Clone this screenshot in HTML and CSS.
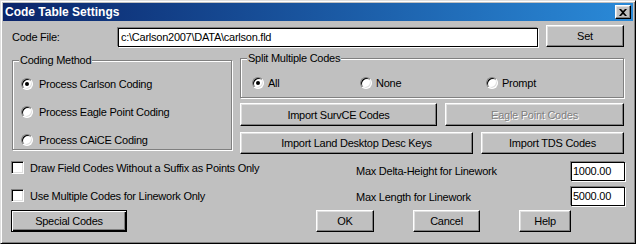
FILE: index.html
```html
<!DOCTYPE html>
<html lang="en">
<head>
  <meta charset="UTF-8">
  <title>Code Table Settings</title>
  <link rel="stylesheet" href="styles.css">
</head>
<body>

<div class="window">

  <!-- Titelleiste -->
  <div class="titlebar">
    <span class="title">Code Table Settings</span>
    <button class="btn close-btn" aria-label="Close">
      <svg width="8" height="7" viewBox="0 0 8 7">
        <path d="M0 0h2l2 2 2-2h2L5 3.5 8 7H6L4 5 2 7H0l3-3.5z" fill="#000"/>
      </svg>
    </button>
  </div>

  <div class="content">

    <!-- Code-Datei -->
    <div class="file-row">
      <span class="file-label">Code File:</span>
      <div class="field file-field">c:\Carlson2007\DATA\carlson.fld</div>
      <button class="btn set-btn">Set</button>
    </div>

    <div class="mid-row">
      <!-- Coding Method -->
      <div class="group coding-group">
        <span class="legend">Coding Method</span>
        <div class="radio-line"><span class="radio checked"></span>Process Carlson Coding</div>
        <div class="radio-line"><span class="radio"></span>Process Eagle Point Coding</div>
        <div class="radio-line"><span class="radio"></span>Process CAiCE Coding</div>
      </div>

      <div class="right-col">
        <!-- Split Multiple Codes -->
        <div class="group split-group">
          <span class="legend">Split Multiple Codes</span>
          <div class="split-options">
            <div class="split-opt opt-all"><span class="radio checked"></span>All</div>
            <div class="split-opt opt-none"><span class="radio"></span>None</div>
            <div class="split-opt"><span class="radio"></span>Prompt</div>
          </div>
        </div>

        <div class="btn-row row-one">
          <button class="btn survce-btn">Import SurvCE Codes</button>
          <button class="btn eagle-btn" disabled>Eagle Point Codes</button>
        </div>
        <div class="btn-row row-two">
          <button class="btn land-btn">Import Land Desktop Desc Keys</button>
          <button class="btn tds-btn">Import TDS Codes</button>
        </div>
      </div>
    </div>

    <!-- Optionen + Grenzwerte -->
    <div class="options-grid">
      <div class="check-line check-one"><span class="checkbox"></span>Draw Field Codes Without a Suffix as Points Only</div>
      <span class="opt-label">Max Delta-Height for Linework</span>
      <div class="field num-field field-one">1000.00</div>

      <div class="check-line check-two"><span class="checkbox"></span>Use Multiple Codes for Linework Only</div>
      <span class="opt-label">Max Length for Linework</span>
      <div class="field num-field">5000.00</div>
    </div>

    <div class="bottom-row">
      <button class="btn btn-default special-btn">Special Codes</button>
      <button class="btn ok-btn">OK</button>
      <button class="btn cancel-btn">Cancel</button>
      <button class="btn help-btn">Help</button>
    </div>

  </div>
</div>

</body>
</html>
```

FILE: styles.css
```css
/* =====================
   Farben (klassisches Windows)
   ===================== */
:root {
  --face: #c0c0c0;
  --light: #dfdfdf;
  --shadow: #808080;
  --dark: #000000;
  --title-from: #0a246a;
  --title-to: #2a8ad8;
}

* {
  box-sizing: border-box;
}

body {
  margin: 0;
  font-family: "Liberation Sans", Arial, sans-serif;
  font-size: 11px;
  letter-spacing: -0.25px;
  color: #000;
  background: var(--face);
}

/* =====================
   Fenster + Titelleiste
   ===================== */
.window {
  width: 636px;
  height: 244px;
  background: var(--face);
  border: 1px solid;
  border-color: var(--light) var(--dark) var(--dark) var(--light);
  box-shadow: inset 1px 1px #fff, inset -1px -1px var(--shadow);
  padding: 2px;
}

.titlebar {
  height: 18px;
  display: flex;
  align-items: center;
  padding: 0 2px;
  background: linear-gradient(to right, var(--title-from), var(--title-to));
  color: #fff;
}

.title {
  font-weight: bold;
  font-size: 12px;
  letter-spacing: 0;
}

.close-btn {
  margin-left: auto;
  width: 16px;
  height: 14px;
  display: flex;
  align-items: center;
  justify-content: center;
}

/* =====================
   Buttons / Felder
   ===================== */
.btn {
  font: inherit;
  letter-spacing: inherit;
  color: #000;
  padding: 0;
  background: var(--face);
  border: 1px solid;
  border-color: #fff var(--dark) var(--dark) #fff;
  box-shadow: inset -1px -1px var(--shadow), inset 1px 1px var(--light);
}

.btn:disabled {
  color: var(--shadow);
  text-shadow: 1px 1px #fff;
}

.btn-default {
  border: 1px solid var(--dark);
  box-shadow: inset 1px 1px #fff, inset -1px -1px var(--dark), inset -2px -2px var(--shadow);
}

.field {
  height: 19px;
  background: #fff;
  border: 1px solid var(--dark);
  box-shadow: -1px -1px var(--shadow), 1px 1px #fff;
  padding: 0 2px;
  line-height: 17px;
  white-space: nowrap;
  overflow: hidden;
}

.radio {
  width: 12px;
  height: 12px;
  flex-shrink: 0;
  border-radius: 50%;
  background: #fff;
  border: 1px solid;
  border-color: var(--shadow) #fff #fff var(--shadow);
  box-shadow: inset 1px 1px var(--dark), inset -1px -1px var(--light);
  display: flex;
  align-items: center;
  justify-content: center;
}

.radio.checked::after {
  content: "";
  width: 4px;
  height: 4px;
  border-radius: 50%;
  background: #000;
}

.checkbox {
  width: 13px;
  height: 13px;
  flex-shrink: 0;
  background: #fff;
  border: 1px solid;
  border-color: var(--shadow) #fff #fff var(--shadow);
  box-shadow: inset 1px 1px var(--dark), inset -1px -1px var(--light);
}

/* Gruppenrahmen, geaetzt */
.group {
  position: relative;
  border: 1px solid var(--shadow);
  box-shadow: inset 1px 1px #fff, 1px 1px #fff;
}

.group .legend {
  position: absolute;
  top: -8px;
  left: 6px;
  padding: 0 1px;
  background: var(--face);
  line-height: 14px;
}

/* =====================
   Inhalt
   ===================== */
.content {
  padding: 0 9px;
}

.file-row {
  display: flex;
  align-items: flex-end;
  height: 21px;
  margin-top: 5px;
}

.file-label {
  width: 106px;
  line-height: 19px;
}

.file-field {
  width: 420px;
}

.set-btn {
  width: 78px;
  height: 22px;
  margin-left: 8px;
}

.mid-row {
  display: flex;
  gap: 8px;
  margin-top: 11px;
}

.coding-group {
  width: 220px;
  height: 90px;
  margin-top: 2px;
  padding: 16px 0 0 8px;
  display: flex;
  flex-direction: column;
  gap: 14px;
}

.radio-line {
  display: flex;
  align-items: center;
  height: 14px;
}

.coding-group .radio {
  margin-right: 6px;
}

.right-col {
  width: 384px;
}

.split-group {
  height: 40px;
  padding: 17px 0 0 11px;
}

.split-options {
  display: flex;
}

.split-opt {
  display: flex;
  align-items: center;
  height: 14px;
}

.split-opt .radio {
  margin-right: 4px;
}

.opt-all {
  width: 108px;
}

.opt-none {
  width: 126px;
}

.btn-row {
  display: flex;
  gap: 8px;
}

.row-one {
  margin-top: 5px;
  height: 23px;
}

.row-two {
  margin-top: 6px;
  height: 22px;
}

.survce-btn { width: 197px; }
.eagle-btn  { width: 179px; }
.land-btn   { width: 233px; }
.tds-btn    { width: 143px; }

/* Optionen */
.options-grid {
  display: grid;
  grid-template-columns: 344px 215px 54px;
  grid-template-rows: 26px 23px;
  align-items: start;
  margin-top: 7px;
}

.check-line {
  display: flex;
  align-items: center;
  margin-left: -1px;
}

.check-line .checkbox {
  margin-right: 6px;
}

.check-two {
  margin-top: 2px;
}

.opt-label {
  line-height: 19px;
  margin-top: 1px;
}

.field-one {
  margin-top: 1px;
}

.num-field {
  padding: 0 1px;
}

.bottom-row {
  display: flex;
  height: 22px;
}

.special-btn {
  width: 116px;
  margin-left: -1px;
}

.ok-btn {
  width: 58px;
  margin-left: 189px;
}

.cancel-btn {
  width: 67px;
  margin-left: 39px;
}

.help-btn {
  width: 52px;
  margin-left: 39px;
}
```
